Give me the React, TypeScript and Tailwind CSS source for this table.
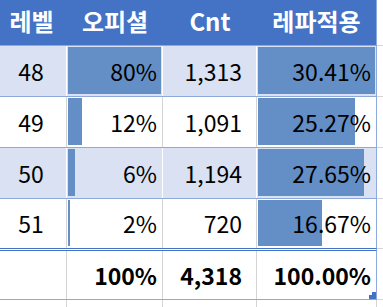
import React from "react";

const rows = [
  { lv: "48", of: "80%", ofv: 80, cnt: "1,313", rp: "30.41%", rpv: 30.41, band: true },
  { lv: "49", of: "12%", ofv: 12, cnt: "1,091", rp: "25.27%", rpv: 25.27, band: false },
  { lv: "50", of: "6%", ofv: 6, cnt: "1,194", rp: "27.65%", rpv: 27.65, band: true },
  { lv: "51", of: "2%", ofv: 2, cnt: "720", rp: "16.67%", rpv: 16.67, band: false },
];

export default function App() {
  return (
    <div
      className="w-[383px] h-[307px] overflow-hidden bg-white text-black text-[23px] leading-none"
      style={{ fontFamily: '"Noto Sans CJK KR", "Noto Sans", sans-serif' }}
    >
      {/* header */}
      <div className="flex h-[46px]">
        <div className="flex w-[377px] h-[46px] bg-[#4472C4] border-b border-b-[#8EA9DB] border-r border-r-[#8EA9DB] text-white font-bold text-[24px]">
          <div className="w-[67px] flex items-center justify-center pb-[4px] pr-[4px]">레벨</div>
          <div className="w-[96px] flex items-center justify-center pb-[4px]">오피셜</div>
          <div className="w-[94px] flex items-center justify-center pb-[4px]">Cnt</div>
          <div className="w-[119px] flex items-center justify-center pb-[4px]">레파적용</div>
        </div>
        <div className="flex-1 border-b border-b-[#D4D4D4]" />
      </div>

      {rows.map((r, i) => {
        const last = i === rows.length - 1;
        const vline = r.band ? "border-r-white" : "border-r-[#D4D4D4]";
        return (
          <div key={r.lv} className="flex">
            <div
              className={`flex w-[377px] border-r border-r-[#8EA9DB] ${
                last ? "h-[50px] border-b border-b-[#4472C4]" : "h-[51px] border-b border-b-[#8EA9DB]"
              } ${r.band ? "bg-[#D9E1F2]" : "bg-white"}`}
            >
              <div className={`w-[67px] border-r ${vline} flex items-center justify-center pr-[4px]`}>{r.lv}</div>
              <div className={`relative w-[96px] border-r ${vline} flex items-center justify-end pr-[5px]`}>
                <div
                  className="absolute left-px top-px bottom-[2px] bg-[#638EC6]"
                  style={{ width: `${(r.ofv / 80) * 93}px` }}
                />
                <span className="relative">{r.of}</span>
              </div>
              <div className={`w-[94px] border-r ${vline} flex items-center justify-end pr-[14px]`}>{r.cnt}</div>
              <div className="relative w-[119px] flex items-center justify-end pr-[5px]">
                <div
                  className="absolute left-px top-px bottom-[2px] bg-[#638EC6]"
                  style={{ width: `${(r.rpv / 30.41) * 117}px` }}
                />
                <span className="relative">{r.rp}</span>
              </div>
            </div>
            <div className={`flex-1 border-b ${last ? "h-[50px]" : "h-[51px]"} border-b-[#D4D4D4]`} />
          </div>
        );
      })}

      {/* double line spacer */}
      <div className="flex h-[2px]">
        <div className="w-[377px] h-[2px] bg-white border-b border-b-[#4472C4] border-r border-r-[#8EA9DB]" />
        <div className="flex-1" />
      </div>

      {/* totals */}
      <div className="flex">
        <div className="flex w-[377px] h-[49px] border-b border-b-[#8EA9DB] border-r border-r-[#8EA9DB] font-bold">
          <div className="w-[67px] border-r border-r-[#D4D4D4]" />
          <div className="w-[96px] border-r border-r-[#D4D4D4] flex items-center justify-end pr-[5px]">100%</div>
          <div className="w-[94px] border-r border-r-[#D4D4D4] flex items-center justify-end pr-[14px]">4,318</div>
          <div className="relative w-[119px] flex items-center justify-end pr-[5px]">
            100.00%
            <svg className="absolute right-0 bottom-0" width="7" height="7" viewBox="0 0 7 7">
              <polygon points="0,3 3,3 3,0 7,0 7,7 0,7" fill="#4472C4" />
            </svg>
          </div>
        </div>
        <div className="flex-1 h-[49px] border-b border-b-[#D4D4D4]" />
      </div>

      {/* below */}
      <div className="flex h-[10px]">
        <div className="w-[67px] border-r border-r-[#D4D4D4]" />
        <div className="w-[96px] border-r border-r-[#D4D4D4]" />
        <div className="w-[94px] border-r border-r-[#D4D4D4]" />
        <div className="w-[120px] border-r border-r-[#D4D4D4]" />
      </div>
    </div>
  );
}
